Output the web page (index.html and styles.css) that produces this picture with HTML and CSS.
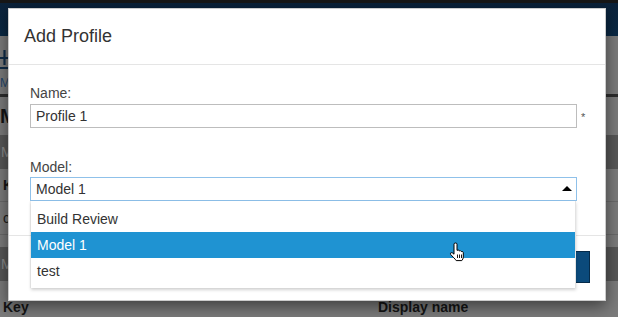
FILE: index.html
```html
<!DOCTYPE html>
<html>
<head>
<meta charset="utf-8">
<title>Add Profile</title>
<link rel="stylesheet" href="styles.css">
</head>
<body>
<div class="page">
  <div class="nav"></div>
  <div class="tools">
    <svg class="add-icon" width="12" height="22" viewBox="0 0 12 22">
      <path d="M4.5 2 V17 M0 10 H9" stroke="#0f2c48" stroke-width="2.2" fill="none"/>
      <path d="M0 20 H9" stroke="#0f2c48" stroke-width="2" fill="none"/>
    </svg>
  </div>
  <div class="crumb">Models</div>
  <div class="rule"></div>
  <h1 class="page-title">Model profiles</h1>
  <div class="panel-bar">Model 1</div>
  <div class="thead"><span class="c-key">Key</span><span class="c-name">Display name</span></div>
  <div class="trow"><span class="c-key">color</span><span class="c-name">Colour</span></div>
  <div class="panel-bar gap">Model 2</div>
  <div class="thead"><span class="c-key">Key</span><span class="c-name">Display name</span></div>
</div>

<div class="modal">
  <div class="modal-header">
    <h4 class="modal-title">Add Profile</h4>
  </div>
  <div class="modal-body">
    <label class="field-label">Name:</label>
    <div class="field-row first">
      <div class="text-input">Profile 1</div>
      <span class="req">*</span>
    </div>
    <label class="field-label second">Model:</label>
    <div class="field-row">
      <div class="select">
        <span class="select-value">Model 1</span>
        <span class="caret"></span>
        <ul class="options">
          <li class="option">Build Review</li>
          <li class="option active">Model 1</li>
          <li class="option">test</li>
        </ul>
      </div>
      <span class="req"></span>
    </div>
  </div>
  <div class="modal-footer">
    <button class="btn-primary">Save</button>
  </div>
</div>

<svg class="cursor" width="16" height="20" viewBox="0 0 16 20">
  <path d="M5 2.2 Q5 1 6.5 1 Q8 1 8 2.2 V8.3 Q9.6 7.6 10.2 8.8 Q11.7 8.2 12.3 9.5 Q13.9 9 14.3 10.6 V15 Q14.3 17 12.8 18.6 H7.2 Q6.3 17.2 4.8 15.8 L1.6 12.4 Q0.9 11 2.3 10.7 Q3.4 10.5 5 12.2 Z" fill="#fff" stroke="#000" stroke-width="1" stroke-linejoin="round"/>
  <path d="M8.5 12.5 V16 M10.5 12.5 V16 M12.5 12.5 V16" stroke="#000" stroke-width="0.9"/>
</svg>
</body>
</html>
```

FILE: styles.css
```css
html, body {
  margin: 0;
  padding: 0;
}
body {
  width: 618px;
  height: 317px;
  overflow: hidden;
  background: #7b7b7b;
  font-family: "Liberation Sans", Arial, sans-serif;
  position: relative;
}
.page {
  width: 618px;
}
.nav {
  height: 33px;
  border-top: 3px solid #171717;
  background: linear-gradient(#0b223a, #0a2945);
}
.tools {
  height: 36px;
  padding-top: 12px;
  box-sizing: border-box;
}
.add-icon {
  display: block;
}
.crumb {
  height: 22px;
  font-size: 12px;
  line-height: 22px;
  color: #23466b;
  padding-left: 0;
}
.rule {
  height: 3px;
  background: #2d2d2d;
}
.page-title {
  margin: 0;
  height: 38px;
  font-size: 20px;
  font-weight: bold;
  line-height: 38px;
  color: #141414;
  padding-left: 0;
}
.panel-bar {
  height: 34px;
  background: #575757;
  color: #8a8a8a;
  font-size: 14px;
  line-height: 34px;
  padding-left: 1px;
}
.panel-bar.gap {
  margin-top: 12px;
}
.thead, .trow {
  display: flex;
  height: 32px;
  line-height: 32px;
  font-size: 14px;
  border-bottom: 1px solid #6a6a6a;
}
.thead {
  font-weight: bold;
  color: #151515;
}
.trow {
  color: #1b1b1b;
}
.thead:last-child {
  border-bottom: none;
  margin-top: 10px;
}
.c-key {
  width: 375px;
  padding-left: 3px;
}
.c-name {
  flex: 1;
}

/* modal */
.modal {
  position: absolute;
  top: 8px;
  left: 8px;
  width: 598px;
  box-sizing: border-box;
  background: #fff;
  border: 1px solid rgba(0, 0, 0, 0.2);
  box-shadow: 0 5px 15px rgba(0, 0, 0, 0.5);
  color: #333;
}
.modal-header {
  padding: 15px 15px;
  height: 25px;
  border-bottom: 1px solid #e5e5e5;
}
.modal-title {
  margin: 0;
  font-size: 18px;
  font-weight: normal;
  line-height: 25px;
  color: #333;
}
.modal-body {
  padding: 18px 0 34px 21px;
}
.field-label {
  display: block;
  height: 20px;
  font-size: 14px;
  line-height: 20px;
  color: #444;
}
.field-label.second {
  margin-top: 29px;
}
.field-row {
  display: flex;
  height: 24px;
}
.field-row.first {
  margin-top: 1px;
}
.text-input {
  flex: 1;
  height: 24px;
  box-sizing: border-box;
  border: 1px solid #bdbdbd;
  padding: 0 5px;
  font-size: 14px;
  line-height: 22px;
  color: #333;
}
.req {
  width: 28px;
  height: 24px;
  box-sizing: border-box;
  padding: 4px 0 0 4px;
  font-size: 11px;
  line-height: 18px;
  color: #555;
}
.select {
  position: relative;
  flex: 1;
  display: flex;
  align-items: center;
  height: 24px;
  box-sizing: border-box;
  border: 1px solid #8fc1ea;
  padding: 0 4px 0 5px;
  font-size: 14px;
  line-height: 22px;
  color: #333;
}
.select-value {
  flex: 1;
}
.caret {
  width: 0;
  height: 0;
  border-left: 5px solid transparent;
  border-right: 5px solid transparent;
  border-bottom: 5px solid #000;
  margin-right: 0;
  margin-top: -1px;
}
.options {
  position: absolute;
  top: calc(100% + 1px);
  left: 0;
  right: 0;
  margin: 0;
  padding: 5px 0 4px;
  list-style: none;
  background: #fff;
  border-right: 1px solid #e3e3e3;
  box-shadow: 0 2px 3px rgba(0, 0, 0, 0.18), -1px 0 1px rgba(0, 0, 0, 0.06);
  z-index: 5;
}
.option {
  height: 26px;
  line-height: 26px;
  padding: 0 6px;
  font-size: 14px;
  color: #333;
}
.option.active {
  background: #1f93d2;
  color: #fff;
}
.modal-footer {
  border-top: 1px solid #e5e5e5;
  padding: 15px 15px 17px;
  display: flex;
  justify-content: flex-end;
}
.btn-primary {
  height: 32px;
  padding: 0 14px;
  background: #0b4a7b;
  border: 1px solid #052b4a;
  color: #fff;
  font-family: "Liberation Sans", Arial, sans-serif;
  font-size: 14px;
}
.cursor {
  position: absolute;
  left: 449px;
  top: 242px;
  z-index: 10;
}
```
